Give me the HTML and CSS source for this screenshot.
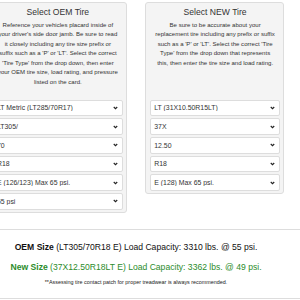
FILE: index.html
```html
<!DOCTYPE html>
<html lang="en">
<head>
    <meta charset="UTF-8">
    <meta name="viewport" content="width=device-width, initial-scale=1.0">
    <title>Tire Size Calculator</title>
    <link rel="stylesheet" href="styles.css">
</head>
<body>

    <div class="panels">
        <section class="panel">
            <h2 class="panel-title">Select OEM Tire</h2>
            <p class="panel-text">Reference your vehicles placard inside of your driver's side door jamb. Be sure to read it closely including any tire size prefix or suffix such as a 'P' or 'LT'. Select the correct 'Tire Type' from the drop down, then enter your OEM tire size, load rating, and pressure listed on the card.</p>
            <select class="tire-select"><option>LT Metric (LT285/70R17)</option></select>
            <select class="tire-select"><option>LT305/</option></select>
            <select class="tire-select"><option>70</option></select>
            <select class="tire-select"><option>R18</option></select>
            <select class="tire-select"><option>E (126/123) Max 65 psi.</option></select>
            <select class="tire-select"><option>55 psi</option></select>
        </section>

        <section class="panel">
            <h2 class="panel-title">Select NEW Tire</h2>
            <p class="panel-text">Be sure to be accurate about your replacement tire including any prefix or suffix such as a 'P' or 'LT'. Select the correct 'Tire Type' from the drop down that represents this, then enter the tire size and load rating.</p>
            <select class="tire-select"><option>LT (31X10.50R15LT)</option></select>
            <select class="tire-select"><option>37X</option></select>
            <select class="tire-select"><option>12.50</option></select>
            <select class="tire-select"><option>R18</option></select>
            <select class="tire-select"><option>E (128) Max 65 psi.</option></select>
        </section>
    </div>

    <hr class="rule rule-top">

    <div class="results">
        <p class="result"><strong>OEM Size</strong> (LT305/70R18 E) Load Capacity: 3310 lbs. @ 55 psi.</p>
        <p class="result result-new"><strong>New Size</strong> (37X12.50R18LT E) Load Capacity: 3362 lbs. @ 49 psi.</p>
        <p class="note">**Assessing tire contact patch for proper treadwear is always recommended.</p>
    </div>

    <hr class="rule rule-bottom">

</body>
</html>
```

FILE: styles.css
```css
:root {
    --text-color: #333333;
    --panel-bg: #f4f4f4;
    --border-color: #dddddd;
    --green-color: #2b8c2b;
}

body {
    font-family: "Liberation Sans", Arial, sans-serif;
    color: var(--text-color);
    background-color: #ffffff;
    margin: 0;
    overflow: hidden;
}

/* Panels */
.panels {
    display: flex;
    align-items: flex-start;
    gap: 18.5px;
    width: 296px;
    margin-left: -12px;
    padding-top: 1.5px;
}

.panel {
    width: 139px;
    box-sizing: border-box;
    background-color: var(--panel-bg);
    border: 1px solid var(--border-color);
    border-radius: 3px;
    padding: 3px 3px 2px 4px;
    display: flex;
    flex-direction: column;
    gap: 2px;
}

.panel-title {
    margin: 0;
    font-size: 8.6px;
    font-weight: normal;
    line-height: 12px;
    text-align: center;
}

.panel-text {
    margin: 1px 0 3px 0;
    padding: 0 4.4px;
    height: 74px;
    font-size: 6.05px;
    line-height: 9.6px;
    text-align: center;
}

.tire-select {
    appearance: none;
    -webkit-appearance: none;
    height: 16.7px;
    margin: 0;
    padding: 0 10px 0 3px;
    font-family: inherit;
    font-size: 6.9px;
    color: var(--text-color);
    background-color: #ffffff;
    background-image: url("data:image/svg+xml,%3Csvg xmlns='http://www.w3.org/2000/svg' width='5' height='4' viewBox='0 0 10 8'%3E%3Cpath d='M1.5 2l3.5 3.5 3.5-3.5' fill='none' stroke='%23222' stroke-width='2.2'/%3E%3C/svg%3E");
    background-repeat: no-repeat;
    background-position: right 4px center;
    border: 1px solid var(--border-color);
    border-radius: 2px;
}

/* Results */
.rule {
    border: 0;
    border-top: 1px solid var(--border-color);
    margin: 0;
}
.rule-top { margin-top: 16.5px; }
.rule-bottom { margin-top: 12px; }

.results {
    width: 296px;
    margin-left: -12px;
    text-align: center;
    padding-top: 11.5px;
}

.result {
    margin: 0 0 9px 0;
    font-size: 8.6px;
    line-height: 11px;
    color: #111111;
}
.result strong { font-weight: bold; }
.result-new { color: var(--green-color); margin-bottom: 6px; }

.note {
    margin: 0;
    font-size: 5.4px;
    line-height: 7px;
    color: #222222;
}
```
